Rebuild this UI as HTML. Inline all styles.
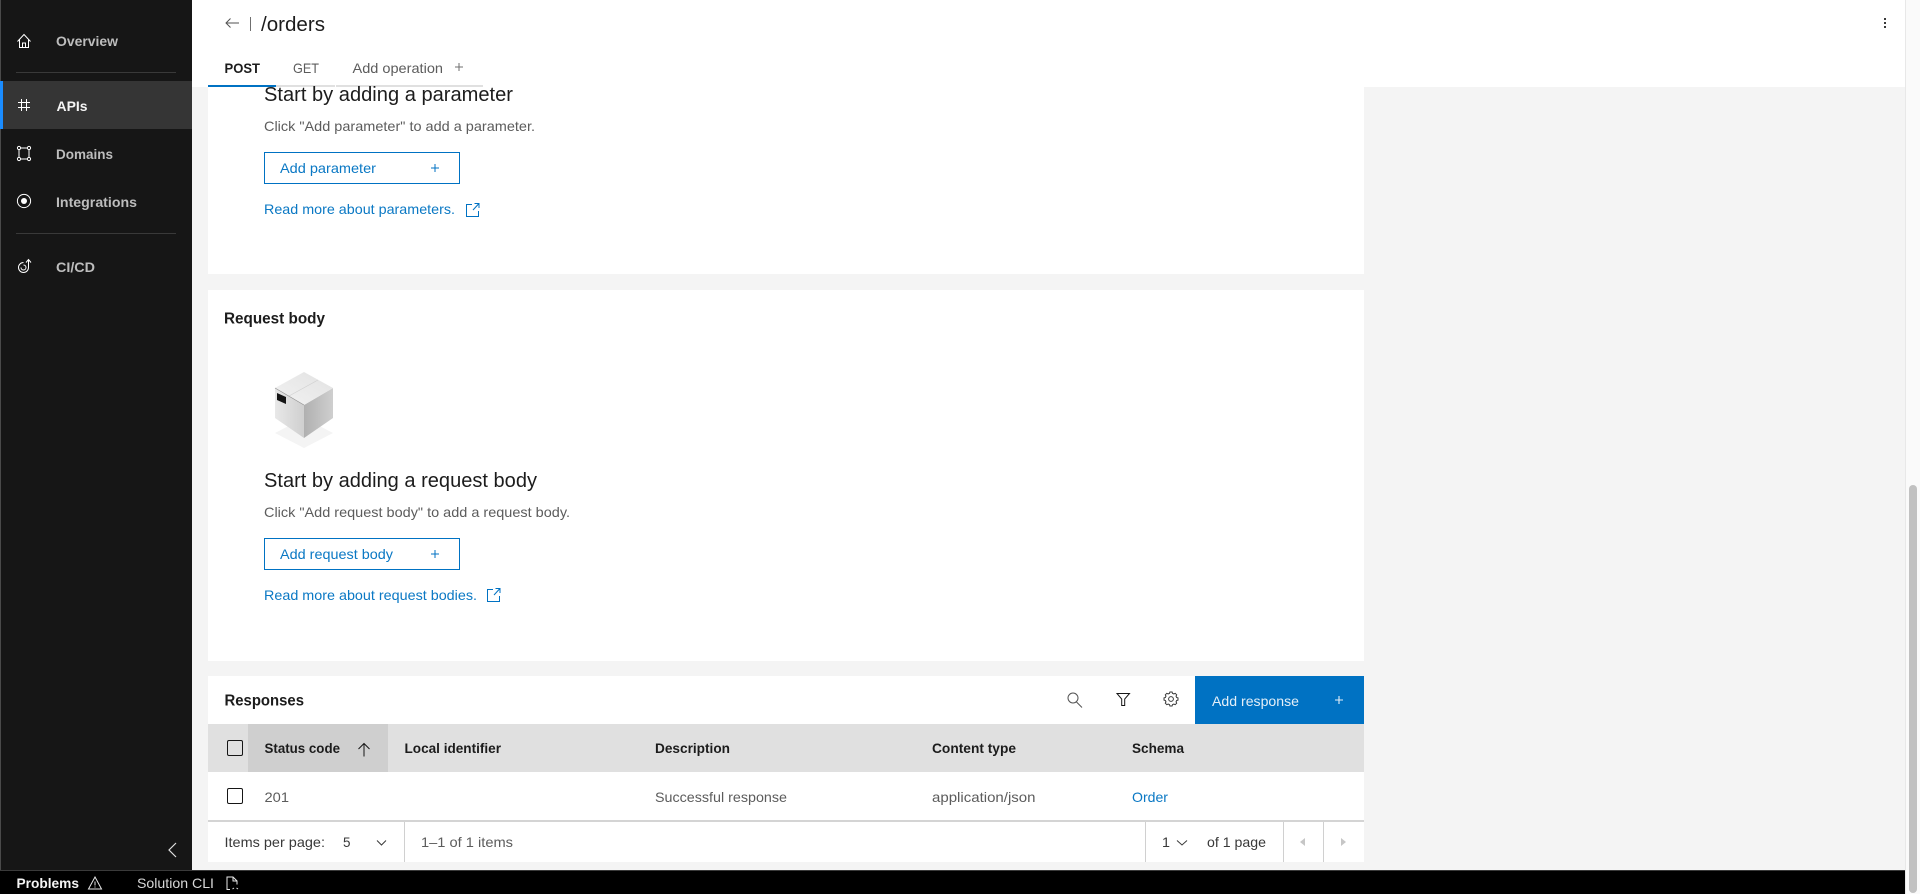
<!DOCTYPE html>
<html lang="en">
<head>
<meta charset="utf-8">
<title>/orders</title>
<style>
html,body{margin:0;padding:0;width:1920px;height:894px;overflow:hidden;background:#f4f4f4}
.b{position:absolute;display:block}
svg{position:absolute;left:0;top:0}
text{font-family:"Liberation Sans",sans-serif;font-size:14px;fill:#525252}
.nav{fill:#bdbdbd;font-weight:700}
.bd{fill:#1c1c1c;font-weight:700}
.link{fill:#0a78c4}
.h{fill:#1c1c1c;font-size:20px}
.t{fill:#5c5c5c}
.ic{fill:none;stroke:#fff;stroke-width:1}
.ik{fill:none;stroke:#161616;stroke-width:1}
.ib{fill:none;stroke:#0072c3;stroke-width:1}
</style>
</head>
<body>
<div class="b" style="left:0;top:0;width:192px;height:870px;background:#161616"></div>
<div class="b" style="left:0;top:0;width:1px;height:870px;background:#4a4a4a"></div>
<div class="b" style="left:1px;top:81px;width:191px;height:48px;background:#353535"></div>
<div class="b" style="left:0;top:81px;width:3px;height:48px;background:#1a8cff"></div>
<div class="b" style="left:16px;top:72px;width:160px;height:1px;background:#393939"></div>
<div class="b" style="left:16px;top:233px;width:160px;height:1px;background:#393939"></div>

<div class="b" style="left:208px;top:87px;width:1156px;height:187px;background:#fff"></div>
<div class="b" style="left:208px;top:290px;width:1156px;height:371px;background:#fff"></div>
<div class="b" style="left:208px;top:676px;width:1156px;height:186px;background:#fff"></div>

<div class="b" style="left:192px;top:0;width:1713px;height:87px;background:#fff"></div>
<div class="b" style="left:208px;top:85px;width:68px;height:2px;background:#0072c3"></div>
<div class="b" style="left:276px;top:85px;width:59px;height:2px;background:#e0e0e0"></div>
<div class="b" style="left:336px;top:85px;width:147px;height:2px;background:#e0e0e0"></div>
<div class="b" style="left:250px;top:17px;width:1px;height:14px;background:#6f6f6f"></div>

<div class="b" style="left:264px;top:152px;width:194px;height:30px;border:1px solid #0072c3"></div>
<div class="b" style="left:264px;top:538px;width:194px;height:30px;border:1px solid #0072c3"></div>

<div class="b" style="left:1195px;top:676px;width:169px;height:48px;background:#0072c3"></div>
<div class="b" style="left:208px;top:724px;width:1156px;height:48px;background:#e0e0e0"></div>
<div class="b" style="left:248px;top:724px;width:140px;height:48px;background:#cfcfcf"></div>
<div class="b" style="left:208px;top:820px;width:1156px;height:2px;background:#d4d4d4"></div>
<div class="b" style="left:404px;top:822px;width:1px;height:40px;background:#d0d0d0"></div>
<div class="b" style="left:1145px;top:822px;width:1px;height:40px;background:#d0d0d0"></div>
<div class="b" style="left:1283px;top:822px;width:1px;height:40px;background:#d0d0d0"></div>
<div class="b" style="left:1323px;top:822px;width:1px;height:40px;background:#d0d0d0"></div>
<div class="b" style="left:227px;top:740px;width:14px;height:14px;border:1px solid #161616;border-radius:2px"></div>
<div class="b" style="left:227px;top:788px;width:14px;height:14px;border:1px solid #161616;border-radius:2px"></div>

<div class="b" style="left:0;top:870px;width:1905px;height:24px;background:#000;border-top:1px solid #3a3a3a;box-sizing:border-box"></div>
<div class="b" style="left:1905px;top:0;width:15px;height:894px;background:#fafafa;border-left:1px solid #e8e8e8;box-sizing:border-box"></div>
<div class="b" style="left:1909px;top:485px;width:8px;height:408px;background:#c1c1c1;border-radius:4px"></div>

<svg width="1920" height="894" viewBox="0 0 1920 894" xmlns="http://www.w3.org/2000/svg">
<defs>
<linearGradient id="g1" x1="0" y1="0" x2="1" y2="0"><stop offset="0" stop-color="#e8e8e8"/><stop offset="1" stop-color="#cfcfcf"/></linearGradient>
<linearGradient id="g2" x1="0" y1="0" x2="1" y2="0"><stop offset="0" stop-color="#b0b0b0"/><stop offset="1" stop-color="#cfcfcf"/></linearGradient>
<linearGradient id="g3" x1="0" y1="1" x2="1" y2="0"><stop offset="0" stop-color="#f2f2f2"/><stop offset="1" stop-color="#e2e2e2"/></linearGradient>
</defs>

<text class="nav" x="56" y="46" textLength="62" lengthAdjust="spacingAndGlyphs">Overview</text>
<text class="nav" x="56.5" y="111" textLength="31" lengthAdjust="spacingAndGlyphs" style="fill:#f4f4f4">APIs</text>
<text class="nav" x="56" y="159" textLength="57" lengthAdjust="spacingAndGlyphs">Domains</text>
<text class="nav" x="56" y="207" textLength="81" lengthAdjust="spacingAndGlyphs">Integrations</text>
<text class="nav" x="56" y="272" textLength="39" lengthAdjust="spacingAndGlyphs">CI/CD</text>

<path class="ic" d="M17.500 41.500L24 34.500l6.500 7M19.500 39.500v8h9v-8M22.500 47.500v-4.500h3v4.500"/>
<path class="ic" d="M21.500 99v12M26.500 99v12M18 102.500h12M18 107.500h12"/>
<g class="ic"><rect x="19" y="148" width="10" height="11"/><circle cx="19" cy="148" r="1.600" fill="#161616"/><circle cx="29" cy="148" r="1.600" fill="#161616"/><circle cx="19" cy="159" r="1.600" fill="#161616"/><circle cx="29" cy="159" r="1.600" fill="#161616"/></g>
<circle class="ic" cx="24" cy="201" r="6.600"/><circle cx="24" cy="201" r="3" fill="#fff"/>
<path class="ic" d="M28.500 260v7.500a5 5 0 1 1-5-5M23.500 265a2.500 2.500 0 1 1-2.500 2.500M26 262.500l2.500-3 2.500 3"/>
<path d="M176 843l-7 7 7 7" fill="none" stroke="#e0e0e0" stroke-width="1.200"/>

<path d="M239 23h-13M230.500 18.500l-4.500 4.500 4.500 4.500" fill="none" stroke="#525252" stroke-width="1"/>
<text class="h" x="261" y="31" textLength="64" lengthAdjust="spacingAndGlyphs">/orders</text>
<text class="bd" x="224.500" y="73" textLength="35.500" lengthAdjust="spacingAndGlyphs">POST</text>
<text class="t" x="293" y="73" textLength="26" lengthAdjust="spacingAndGlyphs">GET</text>
<text class="t" x="352.500" y="73" textLength="90.500" lengthAdjust="spacingAndGlyphs">Add operation</text>
<path d="M459 63v8M455 67h8" fill="none" stroke="#6f6f6f" stroke-width="1"/>
<g fill="#393939"><rect x="1884" y="18" width="2" height="2"/><rect x="1884" y="22" width="2" height="2"/><rect x="1884" y="26" width="2" height="2"/></g>

<text class="h" x="264" y="101" textLength="249" lengthAdjust="spacingAndGlyphs">Start by adding a parameter</text>
<text class="t" x="264" y="131" textLength="271" lengthAdjust="spacingAndGlyphs">Click "Add parameter" to add a parameter.</text>
<text class="link" x="280" y="173" textLength="96" lengthAdjust="spacingAndGlyphs">Add parameter</text>
<path class="ib" d="M435 164v8M431 168h8"/>
<text class="link" x="264" y="214" textLength="191" lengthAdjust="spacingAndGlyphs">Read more about parameters.</text>
<path class="ib" d="M472 204.500h-5.500v12h12V211M473 210l5.500-6M474.500 203.500h4.500v4.500"/>

<text class="bd" x="224" y="323.500" textLength="101" lengthAdjust="spacingAndGlyphs" style="font-size:16px">Request body</text>
<path d="M304 418l29 15-29 15-29-15z" fill="#f4f4f4"/>
<path d="M275 388v30l29 20v-33z" fill="url(#g1)"/>
<path d="M333 388v30l-29 20v-33z" fill="url(#g2)"/>
<path d="M304 372l29 16-29 17-29-17z" fill="url(#g3)"/>
<path d="M275 388l29 17" stroke="#8d8d8d" stroke-width=".6" fill="none"/>
<path d="M289 396l29-16" stroke="#cfcfcf" stroke-width=".6" fill="none"/>
<path d="M277 393l9 4v7l-9-4z" fill="#161616"/>
<text class="h" x="264" y="487" textLength="273" lengthAdjust="spacingAndGlyphs">Start by adding a request body</text>
<text class="t" x="264" y="517" textLength="306" lengthAdjust="spacingAndGlyphs">Click "Add request body" to add a request body.</text>
<text class="link" x="280" y="559" textLength="113" lengthAdjust="spacingAndGlyphs">Add request body</text>
<path class="ib" d="M435 550v8M431 554h8"/>
<text class="link" x="264" y="600" textLength="213" lengthAdjust="spacingAndGlyphs">Read more about request bodies.</text>
<path class="ib" d="M493 589.500h-5.500v12h12V596M494 595l5.500-6M495.500 588.500h4.500v4.500"/>

<text class="bd" x="224.500" y="705.500" textLength="79.500" lengthAdjust="spacingAndGlyphs" style="font-size:16px">Responses</text>
<g fill="none" stroke="#525252" stroke-width="1"><circle cx="1073" cy="698" r="5"/><path d="M1076.500 702l5.500 5.500"/></g>
<path d="M1117 693.500h12.500l-4.800 5.500v6.500h-3v-6.500z" fill="none" stroke="#161616" stroke-width="1"/>
<g fill="none" stroke="#393939"><path stroke-width="1.400" transform="translate(1171 699) scale(.72) translate(-1170 -702.200)" d="M1168.500 692.500h3l.6 1.900 1.900.8 1.800-.9 2.100 2.100-.9 1.800.8 1.900 1.900.6v3l-1.900.6-.8 1.900.9 1.800-2.100 2.100-1.800-.9-1.900.8-.6 1.900h-3l-.6-1.900-1.900-.8-1.800.9-2.100-2.100.9-1.800-.8-1.900-1.900-.6v-3l1.900-.6.8-1.900-.9-1.800 2.100-2.100 1.800.9 1.900-.8z"/><circle cx="1171" cy="699" r="2.400" stroke-width="1"/></g>
<text x="1212" y="706" textLength="87" lengthAdjust="spacingAndGlyphs" style="fill:#e4eff8">Add response</text>
<path d="M1339 696v8M1335 700h8" fill="none" stroke="#e4eff8" stroke-width="1.100"/>

<text class="bd" x="264.500" y="753" textLength="75.500" lengthAdjust="spacingAndGlyphs" style="font-size:13.500px">Status code</text>
<path class="ik" d="M364 756.500v-13M358.500 749l5.500-5.500 5.500 5.500"/>
<text class="bd" x="404.500" y="753" textLength="96.500" lengthAdjust="spacingAndGlyphs" style="font-size:13.500px">Local identifier</text>
<text class="bd" x="655" y="753" textLength="75" lengthAdjust="spacingAndGlyphs" style="font-size:13.500px">Description</text>
<text class="bd" x="932" y="753" textLength="84" lengthAdjust="spacingAndGlyphs" style="font-size:13.500px">Content type</text>
<text class="bd" x="1132" y="753" textLength="52" lengthAdjust="spacingAndGlyphs" style="font-size:13.500px">Schema</text>

<text class="t" x="264.500" y="802" textLength="24.500" lengthAdjust="spacingAndGlyphs">201</text>
<text class="t" x="655" y="802" textLength="132" lengthAdjust="spacingAndGlyphs">Successful response</text>
<text class="t" x="932" y="802" textLength="103.500" lengthAdjust="spacingAndGlyphs">application/json</text>
<text class="link" x="1132" y="802" textLength="36" lengthAdjust="spacingAndGlyphs">Order</text>

<text x="224.500" y="847" textLength="100.500" lengthAdjust="spacingAndGlyphs" style="fill:#393939">Items per page:</text>
<text x="343" y="847" textLength="7.500" lengthAdjust="spacingAndGlyphs" style="fill:#393939">5</text>
<path d="M377 840.500l4.500 4.500 4.500-4.500" fill="none" stroke="#393939" stroke-width="1"/>
<text class="t" x="421" y="847" textLength="92" lengthAdjust="spacingAndGlyphs">1–1 of 1 items</text>
<text x="1162" y="847" textLength="8" lengthAdjust="spacingAndGlyphs" style="fill:#393939">1</text>
<path d="M1177 840.500l5 4.500 5-4.500" fill="none" stroke="#393939" stroke-width="1"/>
<text x="1207" y="847" textLength="59" lengthAdjust="spacingAndGlyphs" style="fill:#393939">of 1 page</text>
<path d="M1305 838v8l-5-4z" fill="#c6c6c6"/>
<path d="M1341 838v8l5-4z" fill="#c6c6c6"/>

<text x="16.500" y="888" textLength="62.500" lengthAdjust="spacingAndGlyphs" style="fill:#f4f4f4;font-weight:700">Problems</text>
<path d="M95 877l6.500 12h-13zM95 881.500v4M95 886.500v1" fill="none" stroke="#e8e8e8" stroke-width="1"/>
<text x="137" y="888" textLength="77" lengthAdjust="spacingAndGlyphs" style="fill:#d8d8d8">Solution CLI</text>
<path d="M230 889.500h-3v-12.500h6l4 4v3.500M233 877v4h4M232.500 889l1.500-1 M238 889l-1.500-1" fill="none" stroke="#e8e8e8" stroke-width="1"/>
</svg>
</body>
</html>
